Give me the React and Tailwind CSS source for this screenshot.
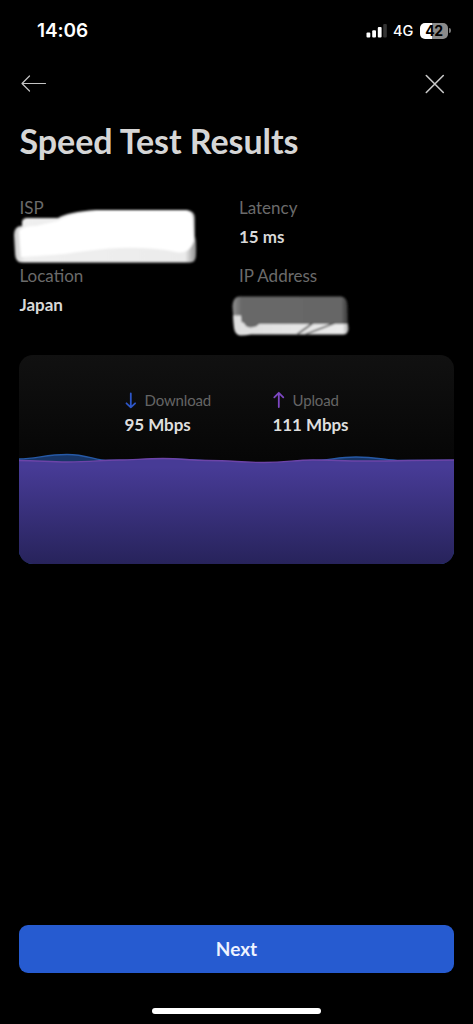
function StatusBar() {
  return (
    <div className="flex h-[60px] shrink-0 items-center justify-between pl-[37px] pr-[22px] pt-px text-white font-['Inter',sans-serif]">
      <span className="text-[19px] font-semibold leading-6 tracking-[-0.1px]">14:06</span>
      <div className="flex items-center">
        <svg width="21" height="15" viewBox="0 0 21 15" fill="#fff">
          <rect x="0.5" y="9.5" width="3.8" height="5" rx="1" />
          <rect x="6.2" y="7.3" width="3.8" height="7.2" rx="1" />
          <rect x="11.8" y="4" width="3.8" height="10.5" rx="1" />
          <rect x="17.2" y="1" width="3.6" height="13.5" rx="1" fill="#333" />
        </svg>
        <span className="ml-[6px] w-[21px] text-[14.5px] font-medium leading-5">4G</span>
        <div className="ml-[6px] flex h-[16px] w-[28px] items-center justify-center rounded-[5px] bg-[linear-gradient(90deg,#fff_43%,#8b8b8b_43%)] text-[14px] font-bold leading-4 tracking-[-0.3px] text-black">
          42
        </div>
        <div className="ml-px h-[5px] w-[2px] rounded-r-full bg-[#777]" />
      </div>
    </div>
  );
}

function Info({ label, value }) {
  return (
    <div className="h-[68px]">
      <div className="h-[29px] text-[17px] leading-[22px] text-[#6b6b6b]">{label}</div>
      <div className="text-[17px] font-bold leading-[22px] tracking-[-0.05px] text-[#d8d8d8]">{value}</div>
    </div>
  );
}

function IspCover() {
  return (
    <svg className="absolute left-[-8.5px] top-[7px]" width="188" height="62" viewBox="0 0 188 62">
      <defs>
        <filter id="soft" x="-5%" y="-10%" width="110%" height="120%">
          <feGaussianBlur stdDeviation="1" />
        </filter>
        <linearGradient id="ispEdge" x1="0" x2="1" y1="0" y2="0">
          <stop offset="0" stopColor="#cfcfcf" />
          <stop offset="0.06" stopColor="#f0f0f0" />
          <stop offset="0.94" stopColor="#ebebeb" />
          <stop offset="1" stopColor="#8d8d8d" />
        </linearGradient>
      </defs>
      <g filter="url(#soft)">
        <path d="M11 18Q11 15 15 14L47 14Q57 8 85 6L176 6Q184 7 184 14L184 32Q185.5 36 185 51Q185 58.500 179 58.500L11 58.500Q4 58.500 4 49L3 31Q3 22 11 22Z" fill="url(#ispEdge)" />
        <path d="M8 27Q12 22 25 22L47 17Q59 9 88 7L176 7Q182 8 182 15L183 37Q178 51 165 48Q140 43 108 44C80 45 60 50 40 51L10 53Z" fill="#fff" />
      </g>
    </svg>
  );
}

function IpCover() {
  return (
    <svg className="absolute left-[-10px] top-[27px]" width="124" height="48" viewBox="0 0 124 48">
      <defs>
        <linearGradient id="ipEdge" x1="0" x2="1" y1="0" y2="0">
          <stop offset="0" stopColor="#909090" />
          <stop offset="0.08" stopColor="#686868" />
          <stop offset="0.94" stopColor="#666" />
          <stop offset="1" stopColor="#383838" />
        </linearGradient>
        <linearGradient id="ipLower" x1="0" x2="1" y1="0" y2="0">
          <stop offset="0" stopColor="#dedede" />
          <stop offset="0.95" stopColor="#eaeaea" />
          <stop offset="1" stopColor="#aaa" />
        </linearGradient>
        <filter id="softIp" x="-5%" y="-10%" width="110%" height="120%">
          <feGaussianBlur stdDeviation="0.8" />
        </filter>
      </defs>
      <g filter="url(#softIp)">
        <path d="M10 4.5L112 4.5Q118 5 118.5 13L119 36L5 36L3.5 14Q4 5 10 4.5Z" fill="url(#ipEdge)" />
        <path d="M4 23.5L12 23.5L12.5 30L15 31Q17 35.5 22 35.5Q28 35 30 32L119 32L119.5 37Q119 42.5 114 42.5L22 42.5Q17 43.5 11 43.500Q6 43 5 36Z" fill="url(#ipLower)" />
        <path d="M68 42.5L84 31M76 42.5L106 31" fill="none" stroke="#555" strokeWidth="1.7" />
      </g>
    </svg>
  );
}

function Wave() {
  return (
    <svg className="block" width="435" height="116" viewBox="0 0 435 116">
      <defs>
        <linearGradient id="fill" x1="0" x2="0" y1="0" y2="1">
          <stop offset="0.08" stopColor="#473b96" />
          <stop offset="1" stopColor="#27235b" />
        </linearGradient>
      </defs>
      <path d="M0 11C17 11 27 6.5 48 6.5C68 6.5 76 12.5 90 12.5C115 12.5 125 12 145 11C185 11 215 16 241 16C265 16 275 12.5 293 12.5C310 12.5 318 9 337 9C358 9 368 12.5 382 12.5L435 12.5V116H0Z" fill="#173566" stroke="#2659a6" strokeWidth="1.3" />
      <path d="M0 12.5C20 12.5 29 14 48 14C73 14 82 12 100 12C115 12 125 10.5 144 10.5C164 10.5 169 12.5 190 12.5C213 12.5 222 14.5 245 14.5C268 14.5 275 12 294 12C315 12 323 13 345 13C385 13 395 12 435 12V116H0Z" fill="url(#fill)" />
      <path d="M0 12.5C20 12.5 29 14 48 14C73 14 82 12 100 12C115 12 125 10.5 144 10.5C164 10.5 169 12.5 190 12.5C213 12.5 222 14.5 245 14.5C268 14.5 275 12 294 12C315 12 323 13 345 13C385 13 395 12 435 12" fill="none" stroke="#6c44a8" strokeWidth="1.3" />
    </svg>
  );
}

function Speed({ label, value, up }) {
  return (
    <div>
      <div className="flex h-[25px] items-center">
        <svg width="20" height="18" viewBox="0 0 20 18" fill="none" stroke={up ? "#7d47c2" : "#2d56c8"} strokeWidth="1.8" strokeLinecap="round" strokeLinejoin="round">
          <path d={up ? "M5.8 16V2M1.3 6.3L5.8 1.8L10.3 6.3" : "M5.8 2.5V16.3M1.5 12.3L5.8 16.3L10.1 12.3"} />
        </svg>
        <span className="text-[15px] leading-5 tracking-[-0.15px] text-[#656565]">{label}</span>
      </div>
      <div className="text-[17px] font-bold leading-[26px] tracking-[-0.05px] text-[#dedede]">{value}</div>
    </div>
  );
}

export default function App() {
  return (
    <main className="flex h-[1024px] w-[473px] flex-col overflow-hidden bg-black font-['Lato',sans-serif]">
      <StatusBar />
      <nav className="flex h-[48px] shrink-0 items-center justify-between pl-[20px] pr-[27px]">
        <button aria-label="Back">
          <svg width="28" height="20" viewBox="0 0 28 20" fill="none" stroke="#c4c4c4" strokeWidth="1.2" strokeLinecap="round" strokeLinejoin="round">
            <path d="M25.5 9.5H2M9.5 2L2 9.5L9.5 17" />
          </svg>
        </button>
        <button aria-label="Close">
          <svg width="22" height="22" viewBox="0 0 22 22" fill="none" stroke="#c8c8c8" strokeWidth="1.6" strokeLinecap="round">
            <path d="M2.3 2.5L19.3 19.5M19.3 2.5L2.3 19.5" />
          </svg>
        </button>
      </nav>
      <h1 className="mt-[11px] h-[78px] shrink-0 pl-[19.5px] text-[34px] font-bold leading-[44px] tracking-[-0.05px] text-[#d6d6d6]">Speed Test Results</h1>
      <section className="grid h-[158px] shrink-0 grid-cols-[219.5px_1fr] content-start pl-[19.5px]">
        <div className="relative">
          <Info label="ISP" />
          <IspCover />
        </div>
        <Info label="Latency" value="15 ms" />
        <Info label="Location" value="Japan" />
        <div className="relative">
          <Info label="IP Address" />
          <IpCover />
        </div>
      </section>
      <section className="mx-[19px] flex h-[209px] w-[435px] shrink-0 flex-col justify-between overflow-hidden rounded-[14px] bg-[linear-gradient(180deg,#111_0%,#060606_50%)]">
        <div className="flex pl-[105.5px] pt-[32px]">
          <div className="w-[148px]">
            <Speed label="Download" value="95 Mbps" />
          </div>
          <Speed label="Upload" value="111 Mbps" up />
        </div>
        <Wave />
      </section>
      <div className="mt-auto px-[19px]">
        <button className="h-[48px] w-[435px] rounded-[9px] bg-[#265bd0] text-[19px] font-bold text-[#eef3ff]">Next</button>
      </div>
      <div className="mx-auto mb-[10px] mt-[35px] h-[6px] w-[169px] shrink-0 rounded-full bg-white" />
    </main>
  );
}
